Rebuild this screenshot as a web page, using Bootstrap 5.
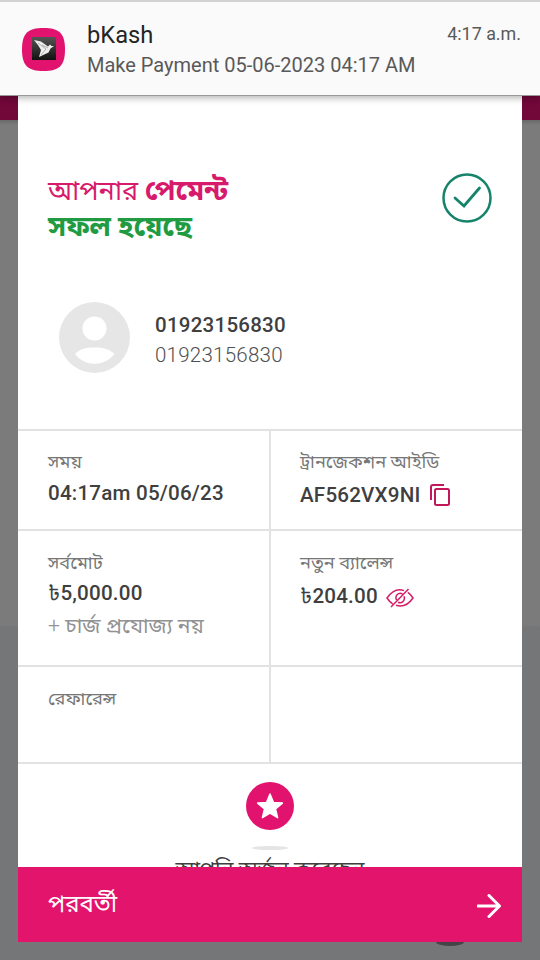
<!DOCTYPE html>
<html lang="bn">
<head>
<meta charset="utf-8">
<meta name="viewport" content="width=device-width, initial-scale=1">
<title>bKash</title>
<link href="https://cdn.jsdelivr.net/npm/bootstrap@5.3.0/dist/css/bootstrap.min.css" rel="stylesheet">
<style>
body{font-family:Roboto,"Noto Sans Bengali","Noto Sans",sans-serif;background:linear-gradient(#7b7b7b 0 625px,#747678 627px);width:540px;height:960px;overflow:hidden;color:#3f3f3f}
svg{display:block;flex:none}
.notice{height:96px;background:#fafafa;border-top:2px solid #d2d2d2;border-bottom:1px solid #999;box-shadow:0 2px 7px rgba(0,0,0,.3);padding:18px 19px 0 22px;z-index:2}
.notice-icon{margin-right:22px}
.notice-title{font-size:23.7px;line-height:30px;color:#252525}
.notice-text{font-size:20px;line-height:30px;color:#595959}
.notice-time{font-size:17.9px;line-height:28px;color:#595959}
.app-strip{height:864px;background:linear-gradient(#72073a 0 24px,#696969 24px,transparent 29px);padding:0 18px}
.sheet{height:846px}
.intro{height:333px;padding:77px 30px 0}
.headline{font-size:27px;line-height:36px;color:#d71a6c}
.strong-word{font-size:28px;line-height:34px}
.done{color:#219b42;font-size:28.3px;line-height:34px}
.payee{margin-top:57px;padding-left:11px;gap:25px}
.num{font-size:20.5px;line-height:30px;letter-spacing:.25px}
.num-bold{font-weight:500;margin-top:4px}
.num-light{font-weight:300;color:#505050}
.cell{border-top:2px solid #e2e2e2;padding:18px 0 0 30px}
.cell-left{border-right:2px solid #e2e2e2;width:253px}
.cell-right{width:251px;padding-left:29px}
.r1{height:100px}.r2{height:136px}.r3{height:97px}
.r2 .cell,.r3 .cell{padding-top:19px}
.lbl{font-size:18.2px;line-height:26px;color:#777}
.val{font-size:20.6px;line-height:30px;font-weight:500;letter-spacing:.2px;margin-top:2px}
.r1 .val{margin-top:3px}
.cell .val-icon{margin-top:5px}
.taka{font-weight:400}
.fee{font-size:21.2px;line-height:30px;color:#929292;margin-top:3px}
.plus-sign{font-weight:300}
.reward{height:105px;border-top:2px solid #e2e2e2;padding-top:18px}
.shade{width:36px;height:4px;border-radius:50%;background:#e4e4e4;margin-top:16px}
.earned{font-size:21.2px;line-height:30px;margin-top:4px}
.next-btn{height:75px;background:#e3146c;border:0;border-radius:0;padding:0 20px 2px 30px;font-size:24px}
.next-btn:hover{background:#e3146c}
.knob{width:28px;height:4px;border-radius:0 0 50% 50%/0 0 100% 100%;background:#454547;margin-left:418px}
</style>
</head>
<body>
<header class="notice d-flex position-relative">
  <svg width="43" height="43" viewBox="0 0 43 43" class="mt-2 notice-icon"><defs><linearGradient id="g" x2="0" y2="1"><stop stop-color="#555"/><stop offset="1" stop-color="#111"/></linearGradient></defs><path d="M21.500 0C37 0 43 5 43 21.500S37 43 21.500 43 0 38 0 21.500 6 0 21.500 0Z" fill="#e2136e"/><path d="M10 9h24v23H10z" fill="url(#g)"/><path d="m12 12 7 1.500 7 5 2-2 1.500 1.500L32 18l-3.500 2.500-2 4L17 29l2-7-3-5z" fill="#eee"/><path d="m16 15 8 6-5 6m1-10 6 3" stroke="#888" stroke-width=".6" fill="none"/></svg>
  <div class="flex-grow-1 text-nowrap"><div class="notice-title">bKash</div><div class="notice-text">Make Payment 05-06-2023 04:17 AM</div></div>
  <div class="notice-time text-nowrap">4:17 a.m.</div>
</header>
<main class="app-strip">
  <div class="sheet bg-white d-flex flex-column">
    <section class="intro">
      <div class="d-flex justify-content-between">
        <h1 class="headline fw-normal mb-0 text-nowrap">আপনার <b class="strong-word">পেমেন্ট</b><br><b class="done">সফল হয়েছে</b></h1>
        <svg width="50" height="50" viewBox="0 0 50 50" fill="none" stroke="#16846a" stroke-width="2.500"><circle cx="25" cy="25" r="23.500"/><path d="m13 25 9 8 15.500-18" stroke-width="2.800" stroke-linecap="round"/></svg>
      </div>
      <div class="payee d-flex align-items-center">
        <svg width="71" height="71" viewBox="0 0 71 71"><circle cx="35.500" cy="35.500" r="35.500" fill="#e6e6e6"/><circle cx="35.500" cy="26.500" r="12" fill="#fff"/><path d="M16 52c5-5 10-6.500 19.500-6.500S50 47 55.500 52C45 65 26 65 16 52Z" fill="#fff"/></svg>
        <div><div class="num num-bold">01923156830</div><div class="num num-light">01923156830</div></div>
      </div>
    </section>
    <div class="d-flex r1">
      <div class="cell cell-left"><div class="lbl">সময়</div><div class="val">04:17am 05/06/23</div></div>
      <div class="cell cell-right"><div class="lbl">ট্রানজেকশন আইডি</div><div class="val val-icon d-flex align-items-center gap-2">AF562VX9NI <svg width="22" height="24" viewBox="0 0 22 24" fill="none" stroke="#c2185b" stroke-width="2"><path d="M2 17V4q0-2 2-2h11"/><rect x="6" y="6" width="14" height="16" rx="1.500"/></svg></div></div>
    </div>
    <div class="d-flex r2">
      <div class="cell cell-left"><div class="lbl">সর্বমোট</div><div class="val"><span class="taka">৳</span>5,000.00</div><div class="fee"><span class="plus-sign">+</span> চার্জ প্রযোজ্য নয়</div></div>
      <div class="cell cell-right"><div class="lbl">নতুন ব্যালেন্স</div><div class="val val-icon d-flex align-items-center gap-2"><span><span class="taka">৳</span>204.00</span> <svg width="28" height="20" viewBox="0 0 28 20" fill="none" stroke="#d51e68" stroke-width="1.500" class="mt-1"><path d="M18 2.600C10-.5 4.500 5 1 10c1.600 2.500 3.500 4.500 5.700 5.800M10 17.300c8 2.700 13.500-2.300 17-7.300-1.600-2.500-3.200-4.300-5.200-5.600M16.500 5.800c-4-2-8 2-6 6.200M12 14.300c4 1.700 7.500-2 6-6M5 19 22.500 1"/></svg></div></div>
    </div>
    <div class="d-flex r3">
      <div class="cell cell-left"><div class="lbl">রেফারেন্স</div></div>
      <div class="cell cell-right"></div>
    </div>
    <section class="reward d-flex flex-column align-items-center overflow-hidden">
      <svg width="48" height="48" viewBox="0 0 48 48"><circle cx="24" cy="24" r="24" fill="#e2136e"/><path d="m24 12 3.400 8.400 9 .7-6.900 5.800 2.100 8.800-7.600-4.700-7.600 4.700 2.100-8.800-6.900-5.800 9-.7Z" fill="#fff" stroke="#fff" stroke-width="1.500" stroke-linejoin="round"/></svg>
      <div class="shade flex-shrink-0"></div>
      <div class="earned text-nowrap">আপনি অর্জন করেছেন</div>
    </section>
    <button class="next-btn btn text-white d-flex justify-content-between align-items-center w-100"><span>পরবর্তী</span><svg width="25" height="24" viewBox="0 0 25 24" fill="none" stroke="#fff" stroke-width="3" class="mt-1"><path d="M1 12h21M12 1.500 22.500 12 12 22.500" stroke-linejoin="round" stroke-linecap="round"/></svg></button>
  </div>
  <div class="knob"></div>
</main>
<script src="https://cdn.jsdelivr.net/npm/bootstrap@5.3.0/dist/js/bootstrap.bundle.min.js"></script>
</body>
</html>
